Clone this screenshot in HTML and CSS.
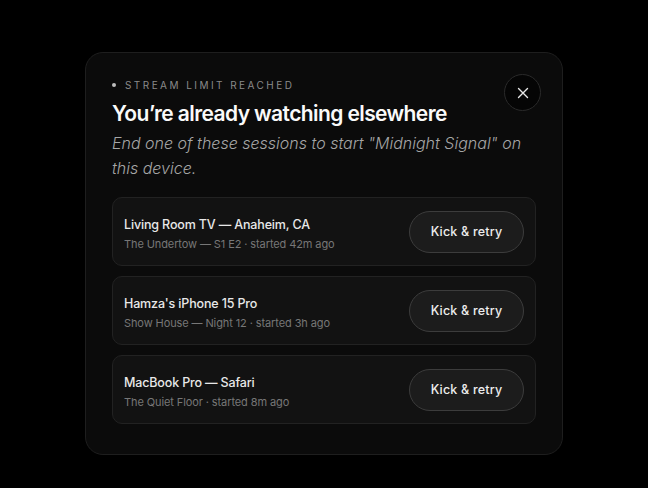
FILE: index.html
```html
<!DOCTYPE html>
<html>
<head>
 <meta charset="UTF-8">
 <title>Stream limit reached</title>
 <link rel="stylesheet" href="styles.css">
</head>
<body>
<div class="dialog">
  <button class="close" aria-label="Close">
    <svg width="12" height="12" viewBox="0 0 12 12"><path d="M1.5 1.5l9 9M10.5 1.5l-9 9" stroke="#e8e8e8" stroke-width="1.4" stroke-linecap="round" fill="none"/></svg>
  </button>
  <div class="eyebrow"><span class="dot"></span>Stream limit reached</div>
  <h1>You’re already watching elsewhere</h1>
  <p class="lead">End one of these sessions to start "Midnight Signal" on this device.</p>
  <ul class="sessions">
    <li>
      <div class="info"><div class="dev">Living Room TV — Anaheim, CA</div><div class="meta">The Undertow — S1 E2 · started 42m ago</div></div>
      <button class="kick">Kick &amp; retry</button>
    </li>
    <li>
      <div class="info"><div class="dev">Hamza's iPhone 15 Pro</div><div class="meta">Show House — Night 12 · started 3h ago</div></div>
      <button class="kick">Kick &amp; retry</button>
    </li>
    <li>
      <div class="info"><div class="dev">MacBook Pro — Safari</div><div class="meta">The Quiet Floor · started 8m ago</div></div>
      <button class="kick">Kick &amp; retry</button>
    </li>
  </ul>
</div>
</body>
</html>
```

FILE: styles.css
```css
body { margin: 0; background: #000; font-family: Inter, "Noto Sans", sans-serif;
  color: #ededed; height: 488px; display: flex; justify-content: center; }
.dialog { margin-top: 52px; width: 424px; height: 349px; padding: 25px 26px 27px; background: #0b0b0b;
  border: 1px solid #1e1e1e; border-radius: 18px; position: relative; }
.close { position: absolute; top: 21px; right: 21px; width: 37px; height: 37px;
  border-radius: 50%; background: #050505; border: 1px solid #2a2a2a; padding: 0;
  display: flex; align-items: center; justify-content: center; }
.eyebrow { display: flex; align-items: center; font-size: 10px; letter-spacing: 2.45px;
  text-transform: uppercase; color: #8a8a8a; height: 14px; }
.dot { width: 4px; height: 4px; border-radius: 50%; background: #bdbdbd; margin: 0 9px 0 0; }
h1 { margin: 8px 0 0; font-size: 21px; font-weight: 600; letter-spacing: -0.6px;
  color: #fafafa; line-height: 28px; }
.lead { margin: 3px 0 0; font-size: 16px; font-weight: 300; font-style: italic; line-height: 25px;
  letter-spacing: 0; color: #a6a6a6; width: 420px; }
.sessions { list-style: none; padding: 0; margin: 16px 0 0; display: flex;
  flex-direction: column; gap: 10px; }
.sessions li { height: 69px; box-sizing: border-box; display: flex; align-items: center;
  justify-content: space-between; padding: 0 11px 0 11px; background: #121212;
  border: 1px solid #222; border-radius: 10px; }
.info { padding-top: 4px; }
.dev { font-size: 12.5px; font-weight: 500; letter-spacing: -0.15px; color: #e8e8e8; }
.meta { font-size: 11px; color: #777; margin-top: 5px; letter-spacing: -0.1px; }
.kick { width: 115px; height: 42px; border-radius: 21px; background: #1c1c1c;
  border: 1px solid #3c3c3c; color: #ededed; font-family: inherit; font-size: 12.5px;
  font-weight: 500; letter-spacing: 0.2px; }
```
